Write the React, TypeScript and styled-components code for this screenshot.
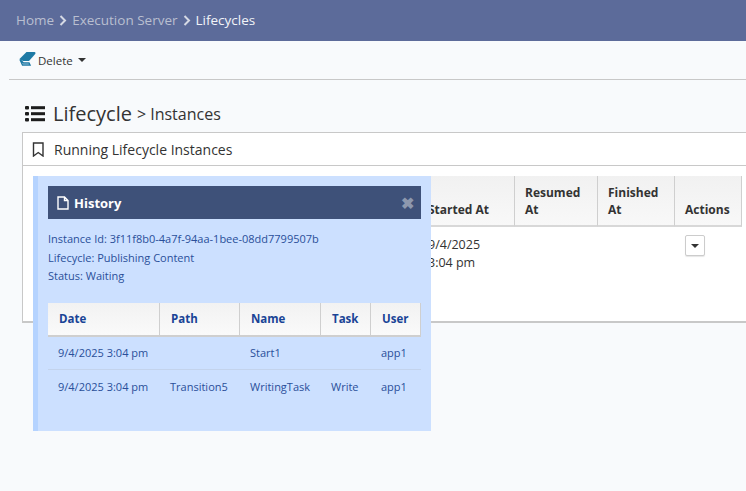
import React from "react";
import styled, { createGlobalStyle } from "styled-components";

const Global = createGlobalStyle`
  html, body { margin: 0; padding: 0; }
  body { background: #f8fafc; font-family: "Open Sans", "Liberation Sans", sans-serif; overflow: hidden; }
`;

const Page = styled.div`
  position: relative;
  width: 746px;
  height: 491px;
  overflow: hidden;
  color: #333;
`;

const TopBar = styled.div`
  height: 41px;
  background: #5c6b9a;
  display: flex;
  align-items: center;
  padding: 0 0 2px 16px;
  box-sizing: border-box;
  font-size: 13.5px;
  color: #b9bfd0;
`;

const Crumb = styled.span<{ $current?: boolean }>`
  color: ${(p) => (p.$current ? "#f2f4f8" : "#b9bfd0")};
`;

const Chevron = styled.svg`
  width: 8px;
  height: 11px;
  margin: 1px 5px 0 5px;
`;

const Toolbar = styled.div`
  height: 38px;
  margin-left: 9px;
  border-bottom: 1px solid #c8c8c8;
  display: flex;
  align-items: center;
  padding: 0 0 0 10px;
  font-size: 11.5px;
  color: #333;
`;

const DeleteIcon = styled.svg`
  width: 17px;
  height: 15px;
  margin-right: 2px;
  margin-top: -3px;
`;

const Caret = styled.span`
  display: inline-block;
  width: 0;
  height: 0;
  margin-left: 5px;
  border-left: 4px solid transparent;
  border-right: 4px solid transparent;
  border-top: 4px solid #333;
`;

const Heading = styled.div`
  display: flex;
  align-items: center;
  padding: 15px 0 0 25px;
  height: 37px;
  box-sizing: content-box;
  color: #333;
`;

const ListIcon = styled.svg`
  width: 20px;
  height: 17px;
  margin-right: 8px;
`;

const Title = styled.span`
  font-size: 20px;
  color: #333;
`;

const SubTitle = styled.span`
  font-size: 16px;
  margin-left: 5px;
  margin-top: 1px;
`;

const Panel = styled.section`
  margin: 0 0 0 22px;
  width: 760px;
  height: 191px;
  box-sizing: border-box;
  border: 1px solid #c8c8c8;
  border-bottom-width: 2px;
  background: #fff;
`;

const PanelHead = styled.div`
  height: 33px;
  box-sizing: border-box;
  border-bottom: 1px solid #c8c8c8;
  display: flex;
  align-items: center;
  padding-left: 9px;
  font-size: 14px;
  color: #333;
`;

const BookmarkIcon = styled.svg`
  width: 13px;
  height: 15px;
  margin-right: 9px;
`;

const PanelBody = styled.div`
  padding: 10px 0 0 395px;
`;

const MainTable = styled.div`
  display: grid;
  grid-template-columns: 97px 83px 77px 67px;
  width: 324px;
  font-size: 12.5px;
`;

const MainHeadCell = styled.div`
  height: 51px;
  box-sizing: border-box;
  padding: 0 10px 7px 10px;
  display: flex;
  align-items: flex-end;
  font-weight: 700;
  font-size: 12px;
  line-height: 17px;
  color: #333;
  background: linear-gradient(#f1f1f1, #f8f8f8);
  border-right: 1px solid #cfcfcf;
  border-bottom: 2px solid #d8d8d8;
`;

const MainCell = styled.div`
  padding: 9px 10px;
  line-height: 18px;
  color: #333;
`;

const ActionButton = styled.button`
  width: 20px;
  height: 21px;
  padding: 0;
  margin-top: -1px;
  background: #fff;
  border: 1px solid #ccc;
  border-radius: 2px;
  display: flex;
  align-items: center;
  justify-content: center;
  box-shadow: 0 1px 1px rgba(0, 0, 0, 0.1);
`;

const Popup = styled.aside`
  position: absolute;
  left: 33px;
  top: 176px;
  width: 398px;
  height: 255px;
  box-sizing: border-box;
  background: #cce0ff;
  border-left: 5px solid #b5d3ff;
  padding: 10px 10px 0 10px;
  color: #1f4a9c;
`;

const PopupHead = styled.div`
  height: 33px;
  background: #3e5179;
  display: flex;
  align-items: center;
  padding: 0 7px 0 9px;
  color: #fff;
  font-weight: 700;
  font-size: 13px;
`;

const FileIcon = styled.svg`
  width: 12px;
  height: 14px;
  margin-right: 5px;
`;

const Close = styled.span`
  margin-left: auto;
  color: #8d98ae;
  font-size: 16px;
  font-weight: 700;
  line-height: 1;
`;

const Info = styled.div`
  margin-top: 11px;
  font-size: 11px;
  line-height: 18.5px;
  color: #2a4f9a;
`;

const HistoryTable = styled.div`
  margin-top: 17px;
  display: grid;
  grid-template-columns: 112px 80px 81px 50px 50px;
  font-size: 11px;
`;

const HistoryHeadCell = styled.div`
  height: 34px;
  box-sizing: border-box;
  padding-left: 11px;
  display: flex;
  align-items: center;
  font-weight: 700;
  font-size: 11.5px;
  color: #1a4496;
  background: linear-gradient(#f2f2f2, #fafafa);
  border-right: 1px solid #cfcfcf;
  border-bottom: 2px solid #cfcfcf;
`;

const HistoryCell = styled.div<{ $last?: boolean }>`
  height: 33px;
  box-sizing: border-box;
  padding-left: 10px;
  display: flex;
  align-items: center;
  color: #2a4f9a;
  border-bottom: ${(p) => (p.$last ? "none" : "1px solid #c3d3ec")};
`;

const history = [
  ["9/4/2025 3:04 pm", "", "Start1", "", "app1"],
  ["9/4/2025 3:04 pm", "Transition5", "WritingTask", "Write", "app1"],
];

export default function App() {
  return (
    <Page>
      <Global />
      <TopBar>
        <Crumb>Home</Crumb>
        <Chevron viewBox="0 0 8 11"><path d="M1.5 1 L6 5.5 L1.5 10" fill="none" stroke="#d5d9e4" strokeWidth="2" /></Chevron>
        <Crumb>Execution Server</Crumb>
        <Chevron viewBox="0 0 8 11"><path d="M1.5 1 L6 5.5 L1.5 10" fill="none" stroke="#d5d9e4" strokeWidth="2" /></Chevron>
        <Crumb $current>Lifecycles</Crumb>
      </TopBar>
      <Toolbar>
        <DeleteIcon viewBox="0 0 17 15">
          <path d="M0.5 8 L7.5 1 H15.5 C16.5 1 16.8 2 16.2 3 L10 10 H4 Z" fill="#1e7aa5" />
          <path d="M1 8.5 L4.5 12 H10 L11 14 H3.5 Z" fill="none" stroke="#1e7aa5" strokeWidth="1.4" />
        </DeleteIcon>
        Delete
        <Caret />
      </Toolbar>
      <Heading>
        <ListIcon viewBox="0 0 20 17" fill="#1d1d1d">
          <rect x="0" y="1" width="4" height="3.4" rx="1" />
          <rect x="6" y="1.2" width="14" height="3" />
          <rect x="0" y="7" width="4" height="3.4" rx="1" />
          <rect x="6" y="7.2" width="14" height="3" />
          <rect x="0" y="13" width="4" height="3.4" rx="1" />
          <rect x="6" y="13.2" width="14" height="3" />
        </ListIcon>
        <Title>Lifecycle</Title>
        <SubTitle>&gt; Instances</SubTitle>
      </Heading>
      <Panel>
        <PanelHead>
          <BookmarkIcon viewBox="0 0 13 15"><path d="M1.5 1 H11 V14 L6.25 10.5 L1.5 14 Z" fill="none" stroke="#333" strokeWidth="1.4" /></BookmarkIcon>
          Running Lifecycle Instances
        </PanelHead>
        <PanelBody>
          <MainTable>
            <MainHeadCell>Started At</MainHeadCell>
            <MainHeadCell>Resumed At</MainHeadCell>
            <MainHeadCell>Finished At</MainHeadCell>
            <MainHeadCell>Actions</MainHeadCell>
            <MainCell>9/4/2025 3:04 pm</MainCell>
            <MainCell />
            <MainCell />
            <MainCell>
              <ActionButton aria-label="Actions"><Caret style={{ marginLeft: 0 }} /></ActionButton>
            </MainCell>
          </MainTable>
        </PanelBody>
      </Panel>
      <Popup>
        <PopupHead>
          <FileIcon viewBox="0 0 12 14"><path d="M1 1 H7.5 L11 4.5 V13 H1 Z M7.5 1 V4.5 H11" fill="none" stroke="#fff" strokeWidth="1.4" /></FileIcon>
          History
          <Close>✖</Close>
        </PopupHead>
        <Info>
          <div>Instance Id: 3f11f8b0-4a7f-94aa-1bee-08dd7799507b</div>
          <div>Lifecycle: Publishing Content</div>
          <div>Status: Waiting</div>
        </Info>
        <HistoryTable>
          {["Date", "Path", "Name", "Task", "User"].map((h) => (
            <HistoryHeadCell key={h}>{h}</HistoryHeadCell>
          ))}
          {history.map((row, i) =>
            row.map((c, j) => (
              <HistoryCell key={`${i}-${j}`} $last={i === 1}>{c}</HistoryCell>
            ))
          )}
        </HistoryTable>
      </Popup>
    </Page>
  );
}
